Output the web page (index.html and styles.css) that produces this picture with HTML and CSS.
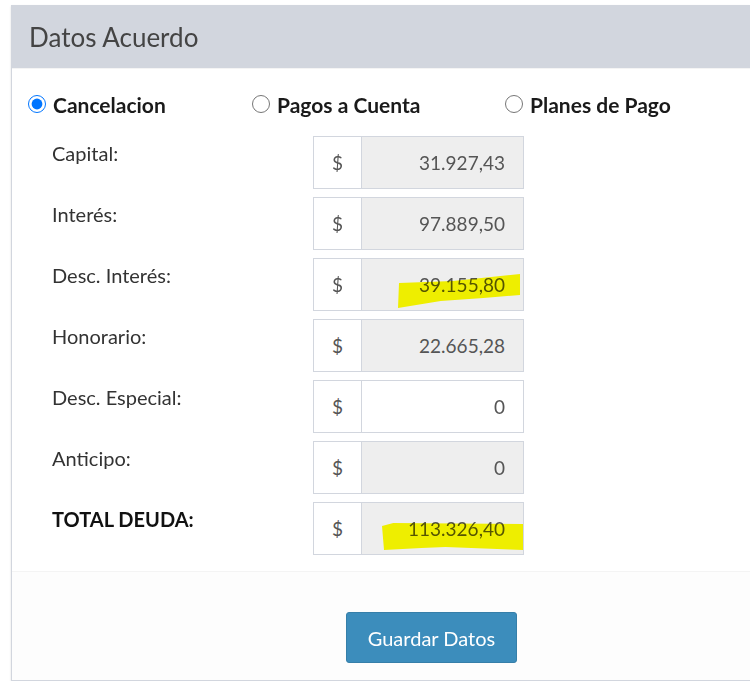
FILE: index.html
```html
<!DOCTYPE html>
<html lang="es">
<head>
<meta charset="utf-8">
<title>Datos Acuerdo</title>
<link rel="stylesheet" href="styles.css">
</head>
<body>
<div class="box">
  <div class="box-header"><h3 class="box-title">Datos Acuerdo</h3></div>
  <div class="box-body">
    <div class="radios">
      <label class="radio"><input type="radio" name="tipo" checked> <span>Cancelacion</span></label>
      <label class="radio"><input type="radio" name="tipo"> <span>Pagos a Cuenta</span></label>
      <label class="radio"><input type="radio" name="tipo"> <span>Planes de Pago</span></label>
    </div>
    <div class="rows">
      <div class="row"><label class="lbl">Capital:</label><div class="ig"><span class="addon">$</span><input class="ctrl" readonly value="31.927,43"></div></div>
      <div class="row"><label class="lbl">Interés:</label><div class="ig"><span class="addon">$</span><input class="ctrl" readonly value="97.889,50"></div></div>
      <div class="row"><label class="lbl">Desc. Interés:</label><div class="ig"><span class="addon">$</span><input class="ctrl" readonly value="39.155,80"><span class="hl hl-1"></span></div></div>
      <div class="row"><label class="lbl">Honorario:</label><div class="ig"><span class="addon">$</span><input class="ctrl" readonly value="22.665,28"></div></div>
      <div class="row"><label class="lbl">Desc. Especial:</label><div class="ig"><span class="addon">$</span><input class="ctrl editable" value="0"></div></div>
      <div class="row"><label class="lbl">Anticipo:</label><div class="ig"><span class="addon">$</span><input class="ctrl" readonly value="0"></div></div>
      <div class="row"><label class="lbl strong">TOTAL DEUDA:</label><div class="ig"><span class="addon">$</span><input class="ctrl" readonly value="113.326,40"><span class="hl hl-2"></span></div></div>
    </div>
  </div>
  <div class="box-footer">
    <button class="btn" type="button">Guardar Datos</button>
  </div>
</div>
</body>
</html>
```
FILE: styles.css
```css
html, body {
  margin: 0;
  padding: 0;
  background: #ffffff;
}
body {
  font-family: "Source Sans Pro", Lato, "Liberation Sans", sans-serif;
  color: #333333;
  overflow: hidden;
}
.box {
  margin: 5px 0 0 11px;
  border: 1px solid #d2d6de;
  border-top: 0;
  border-right: 0;
  background: #ffffff;
  box-shadow: 0 1px 2px rgba(0, 0, 0, 0.12);
}
.box-header {
  height: 63px;
  background: #d2d6de;
  display: flex;
  align-items: center;
  padding-left: 17px;
  border-bottom: 1px solid #f4f4f4;
}
.box-title {
  margin: 0;
  font-size: 26px;
  font-weight: 400;
  color: #444444;
}
.box-body {
  padding: 22px 16px 16px 16px;
}
.radios {
  display: grid;
  grid-template-columns: 224px 253px auto;
  height: 26px;
  align-items: center;
}
.radio {
  display: flex;
  align-items: center;
  gap: 7px;
  font-weight: 700;
  font-size: 21px;
  color: #1a1a1a;
}
.radio input {
  width: 18px;
  height: 18px;
  margin: 0;
}
.rows {
  margin-top: 19px;
  padding-left: 24px;
  display: flex;
  flex-direction: column;
  gap: 8px;
}
.row {
  display: grid;
  grid-template-columns: 261px 211px;
}
.lbl {
  padding-top: 4px;
  line-height: 26px;
  font-size: 20px;
  color: #333333;
}
.lbl.strong {
  font-weight: 700;
  color: #111111;
}
.ig {
  position: relative;
  display: flex;
  height: 53px;
}
.addon {
  width: 47px;
  flex: none;
  border: 1px solid #d2d6de;
  background: #ffffff;
  display: flex;
  align-items: center;
  justify-content: center;
  font-size: 19px;
  color: #555555;
}
.ctrl {
  flex: 1;
  min-width: 0;
  height: 53px;
  box-sizing: border-box;
  border: 1px solid #d2d6de;
  border-left: 0;
  background: #eeeeee;
  text-align: right;
  padding: 0 18px 0 6px;
  font-family: inherit;
  font-size: 19px;
  color: #555555;
  outline: none;
}
.ctrl.editable {
  background: #ffffff;
}
.hl {
  position: absolute;
  background: #ffff00;
  mix-blend-mode: multiply;
  pointer-events: none;
}
.hl-1 {
  left: 85px;
  top: 16px;
  width: 122px;
  height: 34px;
  clip-path: polygon(1px 9px, 45% 7px, 100% 0, 100% 21px, 70% 24px, 35% 27px, 0 34px);
}
.hl-2 {
  left: 69px;
  top: 21px;
  width: 141px;
  height: 27px;
  clip-path: polygon(0 3px, 8% 0, 100% 1px, 100% 100%, 45% 24px, 28% 25px, 2px 100%);
}
.box-footer {
  border-top: 1px solid #f4f4f4;
  background: #fdfdfd;
  padding: 40px 0 17px 334px;
}
.btn {
  width: 171px;
  height: 51px;
  background: #3c8dbc;
  border: 1px solid #367fa9;
  border-radius: 3px;
  color: #ffffff;
  font-family: inherit;
  font-size: 20px;
  cursor: pointer;
}
```
